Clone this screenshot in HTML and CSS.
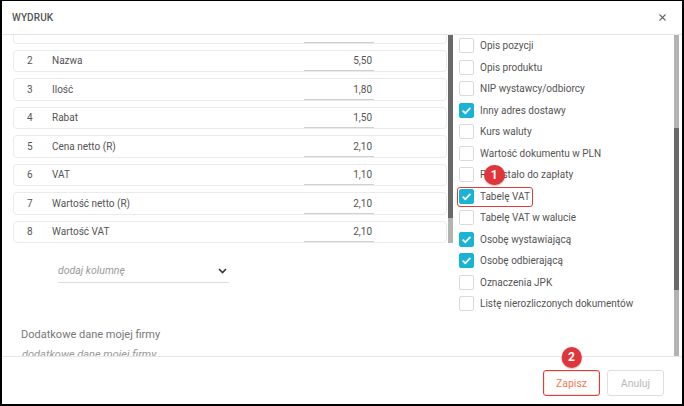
FILE: index.html
```html
<!DOCTYPE html>
<html lang="pl">
<head>
<meta charset="utf-8">
<title>Wydruk</title>
<link rel="stylesheet" href="styles.css">
</head>
<body>
<div class="frame">
  <header class="hdr">
    <span class="title">WYDRUK</span>
    <svg class="close" width="7" height="7" viewBox="0 0 7 7"><path d="M0.5 0.5 L6.5 6.5 M6.5 0.5 L0.5 6.5" stroke="#666" stroke-width="1.1" fill="none"/></svg>
  </header>
  <div class="body">
    <div class="left">
      <div class="table-area">
        <div class="list-viewport">
          <div class="list">
            <div class="card"><span class="num"></span><span class="lbl"></span><span class="val"></span></div>
            <div class="card"><span class="num">2</span><span class="lbl">Nazwa</span><span class="val">5,50</span></div>
            <div class="card"><span class="num">3</span><span class="lbl">Ilość</span><span class="val">1,80</span></div>
            <div class="card"><span class="num">4</span><span class="lbl">Rabat</span><span class="val">1,50</span></div>
            <div class="card"><span class="num">5</span><span class="lbl">Cena netto (R)</span><span class="val">2,10</span></div>
            <div class="card"><span class="num">6</span><span class="lbl">VAT</span><span class="val">1,10</span></div>
            <div class="card"><span class="num">7</span><span class="lbl">Wartość netto (R)</span><span class="val">2,10</span></div>
            <div class="card"><span class="num">8</span><span class="lbl">Wartość VAT</span><span class="val">2,10</span></div>
          </div>
        </div>
        <div class="sbar sbar-left"><div class="thumb-l"></div><div class="track-l"></div></div>
      </div>
      <div class="select">
        <span class="placeholder">dodaj kolumnę</span>
        <svg class="chev" width="9" height="6" viewBox="0 0 9 6"><path d="M1 1 L4.5 4.5 L8 1" stroke="#333" stroke-width="1.6" fill="none"/></svg>
      </div>
      <div class="extra-label">Dodatkowe dane mojej firmy</div>
      <div class="extra-input">dodatkowe dane mojej firmy</div>
    </div>
    <div class="right">
      <div class="checks">
        <div class="row"><span class="cb"></span><span class="txt">Opis pozycji</span></div>
        <div class="row"><span class="cb"></span><span class="txt">Opis produktu</span></div>
        <div class="row"><span class="cb"></span><span class="txt">NIP wystawcy/odbiorcy</span></div>
        <div class="row"><span class="cb on"><svg width="15" height="15" viewBox="0 0 15 15"><path d="M3.6 7.6 L6.3 10.2 L11.4 4.9" stroke="#fff" stroke-width="1.7" fill="none"/></svg></span><span class="txt">Inny adres dostawy</span></div>
        <div class="row"><span class="cb"></span><span class="txt">Kurs waluty</span></div>
        <div class="row"><span class="cb"></span><span class="txt">Wartość dokumentu w PLN</span></div>
        <div class="row"><span class="cb"></span><span class="txt">Pozostało do zapłaty</span><span class="badge badge-1">1</span></div>
        <div class="row"><span class="cb on"><svg width="15" height="15" viewBox="0 0 15 15"><path d="M3.6 7.6 L6.3 10.2 L11.4 4.9" stroke="#fff" stroke-width="1.7" fill="none"/></svg></span><span class="txt">Tabelę VAT</span><span class="hl"></span></div>
        <div class="row"><span class="cb"></span><span class="txt">Tabelę VAT w walucie</span></div>
        <div class="row"><span class="cb on"><svg width="15" height="15" viewBox="0 0 15 15"><path d="M3.6 7.6 L6.3 10.2 L11.4 4.9" stroke="#fff" stroke-width="1.7" fill="none"/></svg></span><span class="txt">Osobę wystawiającą</span></div>
        <div class="row"><span class="cb on"><svg width="15" height="15" viewBox="0 0 15 15"><path d="M3.6 7.6 L6.3 10.2 L11.4 4.9" stroke="#fff" stroke-width="1.7" fill="none"/></svg></span><span class="txt">Osobę odbierającą</span></div>
        <div class="row"><span class="cb"></span><span class="txt">Oznaczenia JPK</span></div>
        <div class="row"><span class="cb"></span><span class="txt">Listę nierozliczonych dokumentów</span></div>
      </div>
      <div class="sbar sbar-right"><div class="track-a"></div><div class="thumb-r"></div><div class="track-b"></div></div>
    </div>
  </div>
  <footer class="ftr">
    <button class="btn btn-save">Zapisz<span class="badge badge-2">2</span></button>
    <button class="btn btn-cancel">Anuluj</button>
  </footer>
</div>
</body>
</html>
```

FILE: styles.css
```css
* { box-sizing: border-box; }
html, body { margin: 0; padding: 0; background: #000; }
body { font-family: Roboto, "Noto Sans", Arial, sans-serif; font-size: 10px; color: #555; }

.frame {
  width: 684px;
  height: 406px;
  background: #fff;
  border-style: solid;
  border-color: #000;
  border-width: 1px 2px 2px 2px;
  display: flex;
  flex-direction: column;
  overflow: hidden;
}

.hdr {
  height: 34px;
  flex: none;
  border-bottom: 1px solid #e6e6e6;
  display: flex;
  align-items: center;
  justify-content: space-between;
  padding: 0 16px 0 10px;
}
.title { font-size: 10px; font-weight: 500; color: #555; letter-spacing: 0.1px; }
.close { display: block; }

.body { height: 321px; flex: none; display: flex; }

.left { width: 451px; flex: none; display: flex; flex-direction: column; overflow: hidden; }
.table-area { height: 208px; flex: none; display: flex; }
.list-viewport { width: 446px; height: 208px; overflow: hidden; padding: 0 1px 0 11px; }
.list { margin-top: -14px; display: flex; flex-direction: column; gap: 6px; }
.card {
  height: 22.5px;
  border: 1px solid #ebebeb;
  border-radius: 4px;
  display: flex;
  align-items: center;
  padding-left: 13px;
  color: #555;
}
.num { width: 25px; flex: none; }
.lbl { flex: 1; }
.val {
  width: 70px;
  align-self: stretch;
  margin-right: 72px;
  display: flex;
  align-items: center;
  justify-content: flex-end;
  padding: 1px 2px 0 0;
  border-bottom: 1px solid #d0d0d0;
  color: #555;
}

.sbar { display: flex; flex-direction: column; flex: none; width: 5px; }
.sbar-left { height: 208px; }
.thumb-l { height: 183px; background: #696969; }
.track-l { flex: 1; background: #b3b3b3; }

.select {
  margin: 16px 0 0 56px;
  width: 171px;
  height: 24px;
  flex: none;
  display: flex;
  align-items: center;
  justify-content: space-between;
  border-bottom: 1px solid #dcdcdc;
  padding-right: 2px;
}
.placeholder { font-style: italic; color: #9a9a9a; font-size: 10.5px; }
.chev { display: block; }

.extra-label { margin: 44px 0 0 19px; height: 16px; line-height: 16px; color: #777; flex: none; font-size: 11px; }
.extra-input { margin: 4px 0 0 20px; height: 16px; line-height: 16px; font-style: italic; color: #999; flex: none; font-size: 11px; }

.right { flex: 1; display: flex; }
.checks { flex: 1; padding-left: 6px; }
.row { height: 21.5px; display: flex; align-items: center; position: relative; color: #555; }
.cb {
  width: 15px; height: 15px; flex: none;
  border: 1px solid #dadada; border-radius: 2px;
  margin-right: 6px;
  display: flex; align-items: center; justify-content: center;
}
.cb.on { background: #19b4d5; border-color: #19b4d5; }
.cb svg { display: block; flex: none; }
.sbar-right { height: 321px; margin-right: 3px; }
.track-a { height: 93px; background: #b3b3b3; }
.thumb-r { height: 162px; background: #696969; }
.track-b { flex: 1; background: #b3b3b3; }

.hl {
  position: absolute;
  left: -2.5px; top: 1.5px;
  width: 76px; height: 20px;
  border: 1.5px solid #e23b3b;
  border-radius: 3px;
}
.badge {
  position: absolute;
  width: 20.5px; height: 20.5px;
  border-radius: 50%;
  background: #e0353a;
  color: #fff;
  font-size: 12px;
  font-weight: 700;
  display: flex; align-items: center; justify-content: center;
  box-shadow: 0 1px 2px rgba(0,0,0,0.25);
}
.badge-1 { left: 25px; top: 0.5px; }
.badge-2 { left: 50%; top: -24px; transform: translateX(-50%); }

.ftr {
  height: 48px;
  flex: none;
  border-top: 1px solid #e6e6e6;
  display: flex;
  justify-content: flex-end;
  align-items: flex-start;
  gap: 7px;
  padding: 13px 18px 0 0;
}
.btn {
  height: 26px;
  width: 57px;
  background: #fff;
  border-radius: 3px;
  font-family: inherit;
  font-size: 10.5px;
  padding: 0;
  position: relative;
}
.btn-save { border: 1.5px solid #e23b3b; color: #f27a56; box-shadow: inset 0 0 0 1px #fbe4de; }
.btn-cancel { border: 1px solid #dedede; color: #b9b9b9; }
```
